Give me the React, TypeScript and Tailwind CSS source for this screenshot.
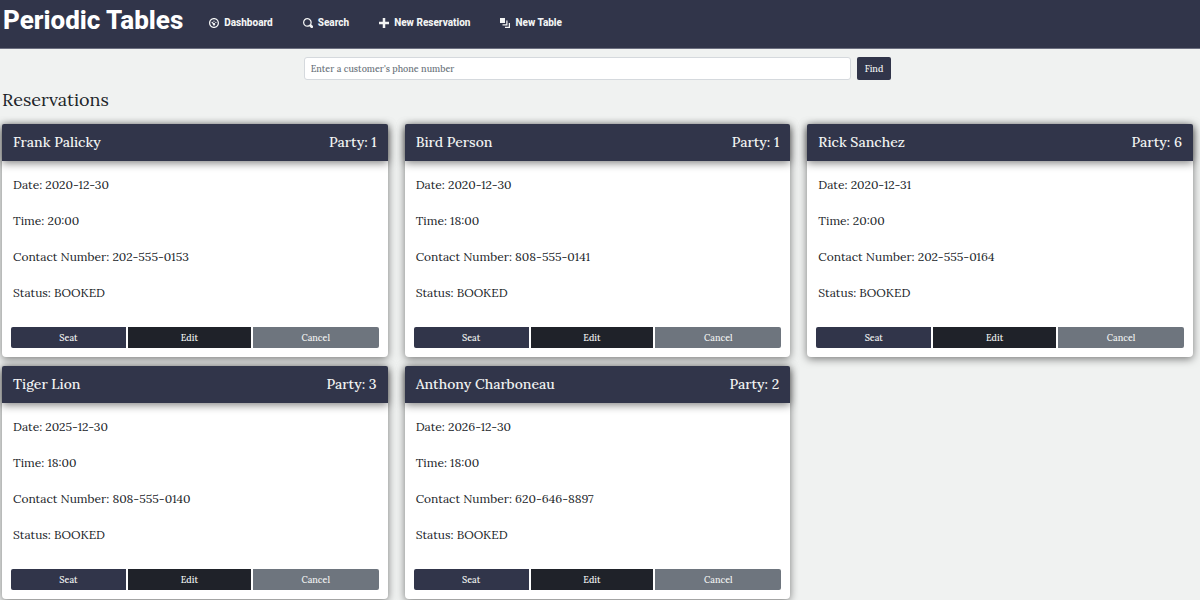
interface Reservation {
  name: string;
  party: number;
  date: string;
  time: string;
  phone: string;
}

const reservations: Reservation[] = [
  { name: "Frank Palicky", party: 1, date: "2020-12-30", time: "20:00", phone: "202-555-0153" },
  { name: "Bird Person", party: 1, date: "2020-12-30", time: "18:00", phone: "808-555-0141" },
  { name: "Rick Sanchez", party: 6, date: "2020-12-31", time: "20:00", phone: "202-555-0164" },
  { name: "Tiger Lion", party: 3, date: "2025-12-30", time: "18:00", phone: "808-555-0140" },
  { name: "Anthony Charboneau", party: 2, date: "2026-12-30", time: "18:00", phone: "620-646-8897" },
];

const links = [
  {
    label: "Dashboard",
    path: "M4 0c-2.2 0-4 1.8-4 4s1.8 4 4 4 4-1.8 4-4-1.8-4-4-4zm0 1c1.66 0 3 1.34 3 3s-1.34 3-3 3-3-1.34-3-3 1.34-3 3-3zm0 1c-.28 0-.5.22-.5.5s.22.5.5.5.5-.22.5-.5-.22-.5-.5-.5zm-1.66 1a.5.5 0 0 0-.19.84l.91.91c-.02.08-.06.16-.06.25 0 .55.45 1 1 1s1-.45 1-1-.45-1-1-1c-.09 0-.17.04-.25.06l-.91-.91a.5.5 0 0 0-.44-.16.5.5 0 0 0-.06 0zm3.16 0c-.28 0-.5.22-.5.5s.22.5.5.5.5-.22.5-.5-.22-.5-.5-.5z",
  },
  {
    label: "Search",
    path: "M3.5 0c-1.93 0-3.5 1.57-3.5 3.5s1.57 3.5 3.5 3.5c.59 0 1.17-.14 1.66-.41a1 1 0 0 0 .13.13l1 1a1.02 1.02 0 1 0 1.44-1.44l-1-1a1 1 0 0 0-.16-.13c.27-.49.44-1.06.44-1.66 0-1.93-1.55-3.5-3.5-3.5zm0 1c1.39 0 2.5 1.11 2.5 2.5 0 .66-.24 1.27-.66 1.72-.01.01-.02.02-.03.03a1 1 0 0 0-.13.13c-.44.4-1.04.63-1.69.63-1.39 0-2.5-1.11-2.5-2.5s1.11-2.5 2.5-2.5z",
  },
  { label: "New Reservation", path: "M3 0v3h-3v2h3v3h2v-3h3v-2h-3v-3h-2z" },
  { label: "New Table", path: "M0 0v4h4v-4h-4zm5 2v3h-3v1h4v-4h-1zm2 2v3h-3v1h4v-4h-1z" },
];

function NavBar() {
  return (
    <nav className="flex h-[49px] items-start border-b border-[#6c6f80] bg-[#31354a] pl-[3px] font-[Roboto,sans-serif] text-white">
      <a href="#" className="text-[26px] leading-10 font-extrabold">Periodic Tables</a>
      <ul className="ml-[26px] flex gap-[30px] pt-[14px]">
        {links.map((link) => (
          <li key={link.label}>
            <a href="#" className="flex items-center gap-[5px] text-[10px] leading-[17px] font-extrabold text-[#f3f4f4]">
              <svg viewBox="0 0 8 8" className="size-[10px] fill-current" aria-hidden="true">
                <path d={link.path} />
              </svg>
              {link.label}
            </a>
          </li>
        ))}
      </ul>
    </nav>
  );
}

function ReservationCard({ name, party, date, time, phone }: Reservation) {
  return (
    <article className="rounded bg-white shadow-[0_2px_8px_rgba(0,0,0,0.5)]">
      <header className="flex h-[37px] items-center justify-between rounded-t-xs bg-[#31354a] px-[11px] pb-[2px] text-sm leading-5 font-medium text-[#f0f2f1] shadow-[0_2px_8px_rgba(0,0,0,0.5)]">
        <h2>{name}</h2>
        <p>Party: {party}</p>
      </header>
      <div className="flex flex-col gap-5 px-[11px] pt-4 pb-[26px] text-xs leading-4">
        <p>Date: {date}</p>
        <p>Time: {time}</p>
        <p>Contact Number: {phone}</p>
        <p>Status: BOOKED</p>
      </div>
      <div className="flex gap-[2px] px-[9px] pb-[9px] text-[9px] leading-[21px] font-medium text-[#f0f2f1]">
        <button type="button" className="flex-[115] rounded-l-xs bg-[#31354a]">Seat</button>
        <button type="button" className="flex-[123] bg-[#1f2229]">Edit</button>
        <button type="button" className="flex-[126] rounded-r-xs bg-[#6e757e]">Cancel</button>
      </div>
    </article>
  );
}

export default function App() {
  return (
    <div className="min-h-screen bg-[#f0f2f1] font-[Lora,'Liberation_Serif',serif] text-[#212529]">
      <NavBar />
      <main>
        <form className="flex justify-center gap-[6px] pt-2 pr-[5px] text-[9px]" onSubmit={(e) => e.preventDefault()}>
          <input
            type="tel"
            aria-label="Customer's phone number"
            placeholder="Enter a customer's phone number"
            className="h-[23px] w-[547px] rounded-[3px] border border-[#d5d9dd] bg-white px-[6px] font-medium placeholder:text-[#6c757d]"
          />
          <button type="submit" className="h-[23px] rounded-xs bg-[#31354a] px-2 font-medium text-[#f0f2f1]">Find</button>
        </form>
        <h1 className="mt-2 pl-[2px] text-lg leading-6">Reservations</h1>
        <section className="mt-3 grid grid-cols-3 gap-x-[17px] gap-y-[9px] pr-[7px] pl-[2px]">
          {reservations.map((reservation) => (
            <ReservationCard key={reservation.name} {...reservation} />
          ))}
        </section>
      </main>
    </div>
  );
}
